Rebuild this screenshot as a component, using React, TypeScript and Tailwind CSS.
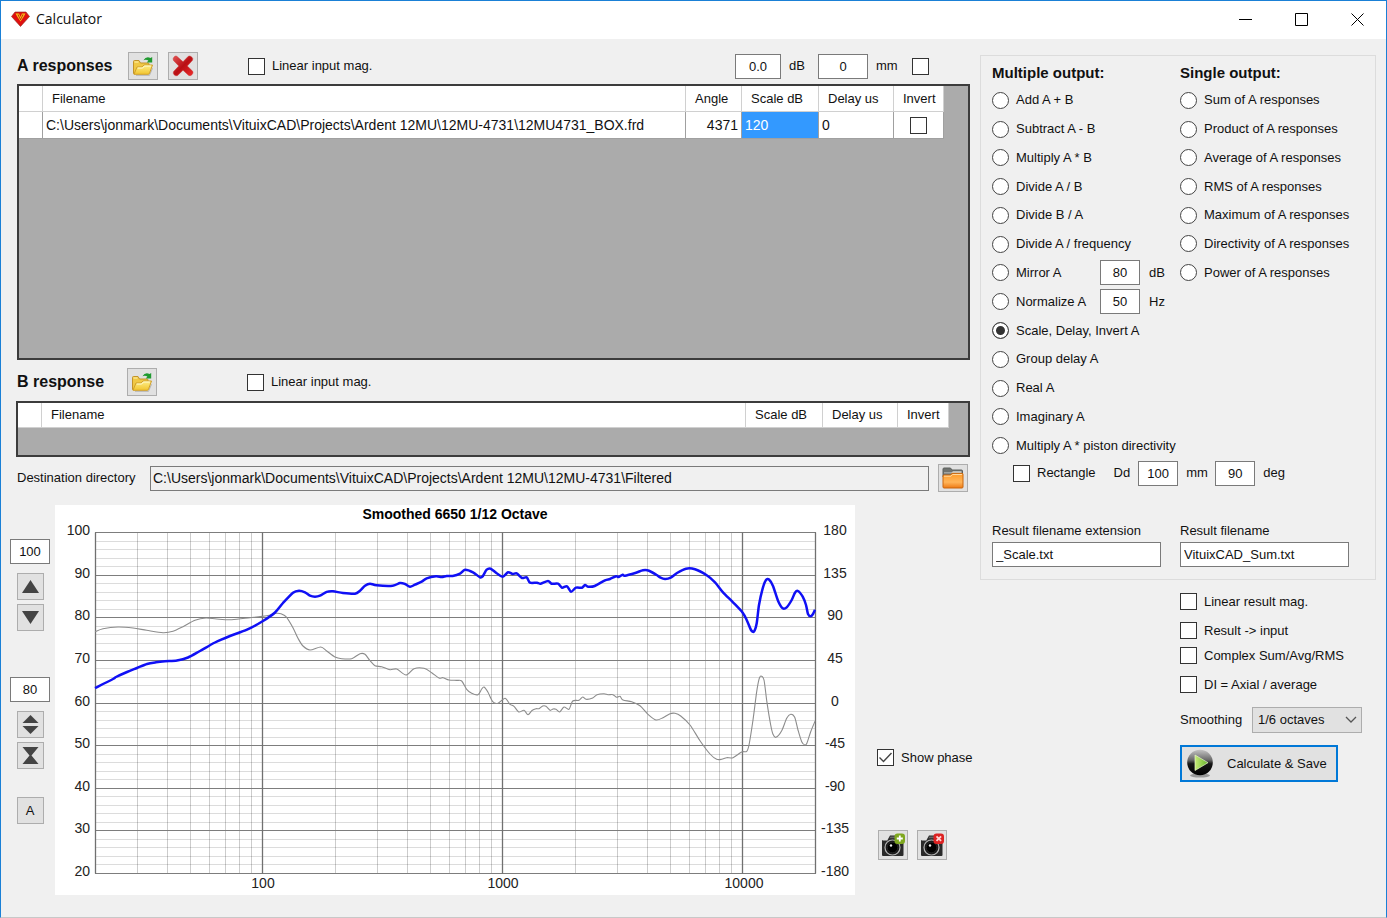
import type { ReactNode } from "react";

type Point = [number, number];

const multipleOutputs: { label: string; value?: string; unit?: string }[] = [
    { label: "Add A + B" },
    { label: "Subtract A - B" },
    { label: "Multiply A * B" },
    { label: "Divide A / B" },
    { label: "Divide B / A" },
    { label: "Divide A / frequency" },
    { label: "Mirror A", value: "80", unit: "dB" },
    { label: "Normalize A", value: "50", unit: "Hz" },
    { label: "Scale, Delay, Invert A" },
    { label: "Group delay A" },
    { label: "Real A" },
    { label: "Imaginary A" },
    { label: "Multiply A * piston directivity" },
];

const singleOutputs = [
    "Sum of A responses",
    "Product of A responses",
    "Average of A responses",
    "RMS of A responses",
    "Maximum of A responses",
    "Directivity of A responses",
    "Power of A responses",
];

const magnitude: Point[] = [
    [40, 183], [58, 174], [61, 172], [72, 167], [82, 163], [92, 159], [101, 157.3], [110, 156.3], [122, 155.5], [133, 152.5],
    [145, 146], [160, 137.5], [175, 131], [192, 124.7], [208, 116], [220, 107.5], [228, 98], [238, 87.7], [244, 85.7],
    [250, 87.3], [255, 90.7], [260, 91.7], [265, 90.7], [271.7, 86.9], [278, 86.3], [288, 88], [300, 88.7], [305, 85.7],
    [310, 80.7], [315, 78.7], [321.7, 80.3], [337.7, 80.7], [345, 78], [350, 79], [355, 81.7], [360, 79.7], [366.7, 76.7],
    [371.7, 73.3], [381, 71.3], [386.7, 72], [391.7, 71], [397.7, 71], [405, 68.7], [410, 64.7], [418, 67.3], [425, 72.3],
    [427.7, 71.3], [431.7, 64.7], [435.7, 63.7], [441.7, 68.3], [447.7, 71.7], [453, 67.3], [457.7, 69], [461.7, 68.3],
    [467, 73], [471.7, 72.3], [475, 77.7], [482, 77.7], [485.7, 78.7], [493, 76], [496.7, 78.7], [503, 78.7], [507, 82.7],
    [512, 81.3], [516, 86.7], [521, 82.7], [527, 82.7], [530, 80], [533, 81.7], [539.7, 81], [550, 75.3], [555, 74],
    [561, 71.3], [563.7, 72], [567.7, 69.7], [570, 70.7], [581, 67.7], [588, 65.3], [594, 65.7], [601.7, 70], [605, 72.3],
    [610, 74], [615.7, 72.7], [622, 68], [631, 63.7], [640, 64.3], [651.7, 70.3], [660, 77.3], [668, 87.3], [678, 97.3],
    [687.7, 107.7], [692, 115.7], [696, 125], [699, 126.5], [701.7, 118.3], [704, 100], [707.7, 83.3], [711, 75], [714, 74.5],
    [718, 81], [723, 95.7], [727.7, 103.3], [731.7, 102.3], [736.7, 95], [740, 87.7], [743, 86], [747.7, 91.7], [751, 100],
    [753, 109], [755.7, 111.3], [758, 109], [760, 104.7],
];

const phase: Point[] = [
    [40, 126.7], [48, 123.7], [63, 122], [78, 123], [91.7, 125.3], [108, 127.7], [118, 126.3], [128, 121.7], [140, 115.3],
    [151, 113], [161.7, 114], [176.7, 114.7], [195, 112.7], [211.7, 110.7], [221.7, 108.3], [226, 108.8], [231, 111.7],
    [237.7, 122.3], [243, 133.3], [248, 141], [255, 145], [265.7, 142], [271.7, 146], [280, 152], [286.7, 153.7],
    [296.7, 153.7], [305, 148.7], [310, 149.3], [315, 155.7], [320, 160.7], [326.7, 161.7], [335, 164.7], [341.7, 164],
    [351, 170], [359, 163.7], [369, 163.3], [376.7, 167.7], [384, 173], [388, 172.7], [394, 175], [401.7, 175.4],
    [406.7, 176], [411.7, 184.3], [416.7, 188.3], [423, 189.7], [426.7, 184], [429, 182], [433, 187.3], [437.7, 196.7],
    [443, 198.3], [450, 193.3], [455, 199.3], [459, 201.3], [463.7, 207], [469, 205.3], [473, 209.7], [477, 205.5],
    [481, 203.7], [484, 203.7], [487.7, 201], [491, 201.3], [495, 205.3], [498, 204], [501, 204.3], [504.7, 207], [509, 202],
    [514, 204.3], [517.7, 196], [524, 195.3], [527.7, 192], [531, 194.3], [537.7, 193], [542, 189.7], [549, 188.7],
    [553, 189.7], [558, 189.7], [561.7, 192.3], [565, 191.3], [568, 195], [576.7, 196.7], [585, 200.7], [593, 209.3],
    [601, 215], [608, 212.7], [615, 208.7], [620, 208.3], [625.7, 211], [635, 220], [645, 235.7], [655, 249], [661.7, 254.3],
    [666.7, 254.3], [671.7, 252.7], [678, 252.7], [686.7, 247], [691.7, 246.3], [694, 240], [698, 215], [701.7, 186.7],
    [704, 174.3], [706, 171], [709, 175], [712, 197.7], [715.7, 220], [718, 229.3], [721, 232.3], [726.7, 225.7],
    [731.7, 213.3], [735.7, 209.3], [739.7, 212.3], [743, 225], [746.7, 236.7], [750, 240], [752, 238], [755.7, 226.7],
    [760, 216.3],
];

// Catmull-Rom through the points
function smoothPath(pts: Point[]) {
    let d = `M${pts[0][0]} ${pts[0][1]}`;
    for (let i = 0; i < pts.length - 1; i++) {
        const p0 = pts[i - 1] ?? pts[i];
        const p1 = pts[i];
        const p2 = pts[i + 1];
        const p3 = pts[i + 2] ?? p2;
        d += `C${p1[0] + (p2[0] - p0[0]) / 7} ${p1[1] + (p2[1] - p0[1]) / 7} ${p2[0] - (p3[0] - p1[0]) / 7} ${p2[1] - (p3[1] - p1[1]) / 7} ${p2[0]} ${p2[1]}`;
    }
    return d;
}

function Chart() {
    const top = 27.5;
    const bottom = 368.5;
    const step = (bottom - top) / 8;
    const xOf = (f: number) => Math.floor(40 + 240 * Math.log10(f / 20)) + 0.5;

    const minorX: number[] = [];
    for (const decade of [10, 100, 1000, 10000]) {
        for (let m = 2; m < 10; m++) {
            const f = m * decade;
            if (f > 20 && f < 20000) minorX.push(xOf(f));
        }
    }
    const minorY = Array.from({ length: 40 }, (_, i) => i).filter((i) => i % 5 !== 0);

    return (
        <svg viewBox="0 0 800 390" className="block h-auto w-full bg-white font-['Liberation_Sans',sans-serif] text-[14px]" role="img" aria-label="Frequency response">
            <g stroke="#dcdcdc">
                {minorY.map((i) => (
                    <line key={i} x1={40} x2={760} y1={Math.floor(top + (i * step) / 5) + 0.5} y2={Math.floor(top + (i * step) / 5) + 0.5} />
                ))}
            </g>
            <g stroke="#000" strokeOpacity={0.2}>
                {minorX.map((x) => (
                    <line key={x} x1={x} x2={x} y1={top} y2={bottom} />
                ))}
            </g>
            <g stroke="#7d7d7d">
                {[0, 1, 2, 3, 4, 5, 6, 7, 8].map((i) => (
                    <line key={i} x1={40} x2={761} y1={Math.floor(top + i * step) + 0.5} y2={Math.floor(top + i * step) + 0.5} />
                ))}
            </g>
            <g stroke="#707070" strokeWidth={1.3}>
                {[20, 100, 1000, 10000, 20000].map((f) => (
                    <line key={f} x1={xOf(f)} x2={xOf(f)} y1={top} y2={bottom} />
                ))}
            </g>
            <path d={smoothPath(phase)} fill="none" stroke="#8c8c8c" strokeWidth={1.1} strokeLinejoin="round" />
            <path d={smoothPath(magnitude)} fill="none" stroke="#1010f5" strokeWidth={2.5} strokeLinejoin="round" />

            <text x={400} y={14} textAnchor="middle" fontSize={14} fontWeight={700}>Smoothed 6650 1/12 Octave</text>
            <g fontSize={14} fill="#222">
                {[100, 90, 80, 70, 60, 50, 40, 30, 20].map((v, i) => (
                    <text key={v} x={35} y={30 + i * step} textAnchor="end">{v}</text>
                ))}
                {[180, 135, 90, 45, 0, -45, -90, -135, -180].map((v, i) => (
                    <text key={v} x={780} y={30 + i * step} textAnchor="middle">{v}</text>
                ))}
                <text x={208} y={383} textAnchor="middle">100</text>
                <text x={448} y={383} textAnchor="middle">1000</text>
                <text x={689} y={383} textAnchor="middle">10000</text>
            </g>
        </svg>
    );
}

function OpenFolderIcon() {
    return (
        <svg width="22" height="20" viewBox="0 0 22 20" aria-hidden="true">
            <defs>
                <linearGradient id="folderFront" x1="0" y1="0" x2="0" y2="1">
                    <stop offset="0" stopColor="#fdee8a" />
                    <stop offset="1" stopColor="#f2c52e" />
                </linearGradient>
            </defs>
            <path d="M4 19.3h13.500l3-7" stroke="#999" strokeOpacity="0.6" fill="none" />
            <path d="M1.500 17.500V5.500q0-1 1-1H7L8.500 7H16q1 0 1 1v5z" fill="#f0c845" stroke="#c2932a" />
            <path d="M2.500 6h4" stroke="#fff3b0" />
            <path d="m2 18.300 3-7.300h5.200l1.800-2h8.500l-3 8.300q-.3 1-1.300 1z" fill="url(#folderFront)" stroke="#cf9f2a" />
            <path d="M5.700 12h5l1.600-2h6.500" stroke="#fffbd2" fill="none" />
            <path d="M11.500 4.300q2.500-4.300 7-2.300l1.700-1V6.500h-5.400l1.600-2q-2.400-1.600-4.900-.2z" fill="#1f9a30" />
        </svg>
    );
}

function DeleteIcon() {
    return (
        <svg width="22" height="22" viewBox="0 0 22 22" aria-hidden="true">
            <defs>
                <linearGradient id="crossFill" x1="0" y1="0" x2="1" y2="1">
                    <stop offset="0" stopColor="#e25454" />
                    <stop offset="0.5" stopColor="#b90f14" />
                    <stop offset="1" stopColor="#f02c2c" />
                </linearGradient>
            </defs>
            <path d="M4.800 1.300 11 6.800l5.300-5.500q1.600-1 3.400.7 1.800 1.700.8 3.300L15.300 11l5.400 5.300q1 1.700-.8 3.500-1.800 1.600-3.400.5L11 15.200l-5.400 5.300q-1.700 1-3.500-.7-1.500-1.700-.5-3.300L6.800 11 1.500 5.500Q.5 3.800 1.900 2.200 3.300.5 4.800 1.300z" fill="url(#crossFill)" stroke="#c33" strokeWidth="0.5" />
        </svg>
    );
}

function OrangeFolderIcon() {
    return (
        <svg width="22" height="22" viewBox="0 0 22 22" aria-hidden="true">
            <defs>
                <linearGradient id="orangeFront" x1="0" y1="0" x2="0" y2="1">
                    <stop offset="0" stopColor="#ff9a26" />
                    <stop offset="0.6" stopColor="#ffb55a" />
                    <stop offset="1" stopColor="#ee7a14" />
                </linearGradient>
            </defs>
            <path d="M1 10V2q0-1 1-1h6.500L10 3h9.500q1 0 1 1v6z" fill="#6f7370" stroke="#5c605d" />
            <path d="M2 5.500h7.500L11 4.200h8.500v2H2z" fill="#d3d6d3" />
            <path d="M1 20V9q0-1 1-1h6.500L10 6.300h10q1 0 1 1V20q0 1-1 1H2q-1 0-1-1z" fill="url(#orangeFront)" stroke="#c9660e" />
            <path d="M2 9.200h7L10.500 7.500H20" stroke="#ffd9a0" fill="none" />
        </svg>
    );
}

function PlayIcon() {
    return (
        <svg width="28" height="29" viewBox="0 0 28 29" aria-hidden="true">
            <defs>
                <linearGradient id="ball" x1="0" y1="0" x2="0" y2="1">
                    <stop offset="0" stopColor="#c4c4c4" />
                    <stop offset="0.4" stopColor="#6a6a6a" />
                    <stop offset="0.55" stopColor="#161616" />
                    <stop offset="1" stopColor="#000" />
                </linearGradient>
                <linearGradient id="play" x1="0" y1="0" x2="1" y2="0">
                    <stop offset="0" stopColor="#c8ec78" />
                    <stop offset="1" stopColor="#63b32a" />
                </linearGradient>
            </defs>
            <ellipse cx="14" cy="26.500" rx="10" ry="2" fill="#999" />
            <circle cx="14" cy="13.500" r="12.800" fill="url(#ball)" />
            <path d="M9 6v15.500L22 13.700z" fill="url(#play)" stroke="#e6f5c8" strokeWidth="0.700" />
        </svg>
    );
}

function CameraIcon({ kind }: { kind: "add" | "remove" }) {
    return (
        <svg width="24" height="24" viewBox="0 0 24 24" aria-hidden="true">
            <path d="M1 7h5.500L9 2.500h7L18 7h4.500v15q0 1-1 1H2q-1 0-1-1z" fill="#2a2a2a" />
            <path d="M9.500 3.500h6l.8 1.800H8.500z" fill="#666" />
            <path d="M1.500 7.500h5" stroke="#888" />
            <circle cx="11.500" cy="14.500" r="7.500" fill="#1a1a1a" stroke="#b5b5b5" strokeWidth="1.200" />
            <circle cx="11.500" cy="14.500" r="5.300" fill="#000" stroke="#222" />
            <circle cx="10" cy="12.500" r="1.200" fill="#eee" />
            {kind === "add" ? (
                <>
                    <rect x="13.500" y=".5" width="10.500" height="10.500" rx="3" fill="#7fa81f" />
                    <path d="M18.800 2.500v6M15.800 5.500h6" stroke="#fff" strokeWidth="1.800" />
                </>
            ) : (
                <>
                    <rect x="13.500" y=".5" width="10.500" height="10.500" rx="3" fill="#dd2222" />
                    <path d="m16.500 3.300 4.600 4.600m0-4.600-4.600 4.600" stroke="#ffd5d5" strokeWidth="1.800" />
                </>
            )}
        </svg>
    );
}

function LogoIcon() {
    return (
        <svg width="19" height="16" viewBox="0 0 19 16" aria-hidden="true">
            <path d="M4 1h11l3.500 4.500L9.500 15.500.5 5.500z" fill="#e00f0f" stroke="#8c2a1c" strokeWidth="0.600" />
            <path d="M4.500 2.500H8L9.500 6 11 2.500h3.500l-2 3.500-3 4.500L6.500 6z" fill="#f7c417" />
            <path d="M6.500 3.500h1L9.500 8l2-4.500h1L9.500 9.500z" fill="#c02010" />
        </svg>
    );
}

function ToolButton({ label, className = "h-[28px] w-[30px]", children }: { label: string; className?: string; children: ReactNode }) {
    return (
        <button type="button" aria-label={label} className={`flex shrink-0 items-center justify-center border border-[#adadad] bg-[#e1e1e1] ${className}`}>
            {children}
        </button>
    );
}

function Check({ label, title, checked }: { label?: string; title?: string; checked?: boolean }) {
    return (
        <label className="flex w-fit items-center gap-[7px] whitespace-nowrap">
            <span className="relative block size-[17px] shrink-0">
                <input type="checkbox" aria-label={title} defaultChecked={checked} className="peer block size-[17px] appearance-none border border-[#333] bg-white" />
                <svg viewBox="0 0 17 17" className="pointer-events-none absolute inset-0 hidden peer-checked:block" aria-hidden="true">
                    <path d="m2.500 8.500 4 4 8-8.500" fill="none" stroke="#444" strokeWidth="1.400" />
                </svg>
            </span>
            {label}
        </label>
    );
}

function Radio({ label, checked, className = "" }: { label: string; checked?: boolean; className?: string }) {
    return (
        <label className={`flex items-center gap-[7px] whitespace-nowrap ${className}`}>
            <input
                type="radio"
                name="output"
                defaultChecked={checked}
                className="size-[17px] shrink-0 appearance-none rounded-full border border-[#444] bg-white checked:bg-[#333] checked:shadow-[inset_0_0_0_3px_white]"
            />
            {label}
        </label>
    );
}

function NumberBox({ value, label, className = "w-[40px]" }: { value: string; label: string; className?: string }) {
    return <input type="text" aria-label={label} defaultValue={value} className={`h-[25px] shrink-0 border border-[#7a7a7a] bg-white text-center ${className}`} />;
}

function TextField({ id, label, value }: { id: string; label: string; value: string }) {
    return (
        <div className="flex w-[188px] flex-col pr-[19px]">
            <label htmlFor={id} className="h-[19px] leading-[16px]">{label}</label>
            <input id={id} type="text" defaultValue={value} className="h-[25px] w-full border border-[#7a7a7a] bg-white px-[3px]" />
        </div>
    );
}

const th = "border-r border-b border-[#d0d0d0] px-[9px] text-left font-normal";
const td = "border-r border-b border-[#a0a0a0] px-[3px]";

function ResponsesA() {
    return (
        <div className="mt-[4px] ml-[7px] h-[276px] border-2 border-[#3c3c3c] bg-[#ababab] pr-[24px]">
            <table className="w-full table-fixed border-separate border-spacing-0 bg-white">
                <colgroup>
                    <col className="w-[24px]" />
                    <col />
                    <col className="w-[56px]" />
                    <col className="w-[77px]" />
                    <col className="w-[75px]" />
                    <col className="w-[50px]" />
                </colgroup>
                <thead>
                    <tr className="h-[26px]">
                        <th className={th}></th>
                        <th className={th}>Filename</th>
                        <th className={th}>Angle</th>
                        <th className={th}>Scale dB</th>
                        <th className={th}>Delay us</th>
                        <th className={th}>Invert</th>
                    </tr>
                </thead>
                <tbody>
                    <tr className="h-[27px]">
                        <td className={td}></td>
                        <td className={`${td} text-[14px] whitespace-nowrap`}>C:\Users\jonmark\Documents\VituixCAD\Projects\Ardent 12MU\12MU-4731\12MU4731_BOX.frd</td>
                        <td className={`${td} text-right text-[14px]`}>4371</td>
                        <td className={`${td} bg-[#3399ff] text-[14px] text-white`}>120</td>
                        <td className={`${td} text-[14px]`}>0</td>
                        <td className={td}>
                            <div className="flex justify-center">
                                <Check title="Invert row" />
                            </div>
                        </td>
                    </tr>
                </tbody>
            </table>
        </div>
    );
}

function ResponseB() {
    return (
        <div className="mt-[5px] ml-[6px] h-[56px] border-2 border-[#3c3c3c] bg-[#ababab] pr-[19px]">
            <table className="w-full table-fixed border-separate border-spacing-0 bg-white">
                <colgroup>
                    <col className="w-[24px]" />
                    <col />
                    <col className="w-[77px]" />
                    <col className="w-[75px]" />
                    <col className="w-[51px]" />
                </colgroup>
                <thead>
                    <tr className="h-[25px]">
                        <th className={th}></th>
                        <th className={th}>Filename</th>
                        <th className={th}>Scale dB</th>
                        <th className={th}>Delay us</th>
                        <th className={th}>Invert</th>
                    </tr>
                </thead>
            </table>
        </div>
    );
}

function ScaleControls() {
    const small = "h-[27px] w-[27px]";
    return (
        <div className="flex w-[40px] shrink-0 flex-col items-center pt-[34px]">
            <NumberBox value="100" label="Scale maximum" />
            <div className="mt-[9px] flex flex-col gap-[4px]">
                <ToolButton label="Move up" className={small}>
                    <svg width="17" height="13" viewBox="0 0 17 13" fill="#444"><path d="M8.500 0 17 13H0z" /></svg>
                </ToolButton>
                <ToolButton label="Move down" className={small}>
                    <svg width="17" height="13" viewBox="0 0 17 13" fill="#444"><path d="M0 0h17L8.500 13z" /></svg>
                </ToolButton>
            </div>
            <div className="mt-[46px]">
                <NumberBox value="80" label="Scale range" />
            </div>
            <div className="mt-[9px] flex flex-col gap-[4px]">
                <ToolButton label="Expand" className={small}>
                    <svg width="17" height="19" viewBox="0 0 17 19" fill="#444"><path d="M8.500 0 16.500 8H.5zM.5 11h16l-8 8z" /></svg>
                </ToolButton>
                <ToolButton label="Compress" className={small}>
                    <svg width="17" height="17" viewBox="0 0 17 17" fill="#444"><path d="M.5 0h16L9.500 8.500 16.500 17H.5l7-8.500z" /></svg>
                </ToolButton>
            </div>
            <button type="button" className="mt-[28px] h-[27px] w-[27px] border border-[#adadad] bg-[#e1e1e1]">A</button>
        </div>
    );
}

function OutputPanel() {
    return (
        <section className="border border-[#dcdcdc] pt-[8px] pb-[12px] pl-[11px]">
            <div className="flex">
                <fieldset className="w-[188px]">
                    <legend className="h-[22px] text-[15px] leading-[18px] font-bold whitespace-nowrap">Multiple output:</legend>
                    <div className="flex h-[374px] flex-col">
                        {multipleOutputs.map((o) => (
                            <div key={o.label} className="flex flex-1 items-center">
                                <Radio label={o.label} checked={o.label.startsWith("Scale")} className={o.value ? "w-[108px]" : ""} />
                                {o.value && (
                                    <>
                                        <NumberBox value={o.value} label={o.label} />
                                        <span className="ml-[9px]">{o.unit}</span>
                                    </>
                                )}
                            </div>
                        ))}
                    </div>
                </fieldset>
                <fieldset>
                    <legend className="h-[22px] text-[15px] leading-[18px] font-bold whitespace-nowrap">Single output:</legend>
                    <div className="flex h-[201px] flex-col">
                        {singleOutputs.map((label) => (
                            <div key={label} className="flex flex-1 items-center">
                                <Radio label={label} />
                            </div>
                        ))}
                    </div>
                </fieldset>
            </div>
            <div className="flex h-[26px] items-center pl-[21px]">
                <Check label="Rectangle" />
                <span className="ml-[18px]">Dd</span>
                <div className="ml-[8px] flex items-center gap-[8px]">
                    <NumberBox value="100" label="Piston diameter" />
                    <span className="w-[21px]">mm</span>
                    <NumberBox value="90" label="Piston angle" />
                    <span>deg</span>
                </div>
            </div>
            <div className="mt-[37px] flex">
                <TextField id="extension" label="Result filename extension" value="_Scale.txt" />
                <TextField id="filename" label="Result filename" value="VituixCAD_Sum.txt" />
            </div>
        </section>
    );
}

export default function App() {
    return (
        <div className="flex min-h-screen flex-col border border-[#1a80d6] border-b-[#c8c8c8] bg-[#f0f0f0] font-['Liberation_Sans',Arial,sans-serif] text-[13px] leading-[16px] text-[#111]">
            <header className="flex h-[38px] items-center bg-white pr-[1px] pb-[2px] pl-[10px]">
                <LogoIcon />
                <h1 className="ml-[6px] flex-1 font-['Open_Sans',sans-serif] text-[14px]">Calculator</h1>
                <button type="button" aria-label="Minimize" className="flex h-full w-14 items-center justify-center">
                    <svg width="13" height="13" viewBox="0 0 13 13" stroke="#000"><path d="M0 6.500h13" /></svg>
                </button>
                <button type="button" aria-label="Maximize" className="flex h-full w-14 items-center justify-center">
                    <svg width="13" height="13" viewBox="0 0 13 13" stroke="#000" fill="none"><path d="M.5.500h12v12H.5z" /></svg>
                </button>
                <button type="button" aria-label="Close" className="flex h-full w-14 items-center justify-center">
                    <svg width="13" height="13" viewBox="0 0 13 13" stroke="#000"><path d="m.5.500 12 12m0-12-12 12" /></svg>
                </button>
            </header>

            <main className="flex flex-1 gap-[10px] pr-[10px] pl-[9px]">
                <div className="min-w-0 flex-1">
                    {/* A responses */}
                    <div className="mt-[13px] flex h-[28px] items-center pl-[7px]">
                        <h2 className="w-[111px] text-[16px] font-bold">A responses</h2>
                        <div className="flex gap-[10px]">
                            <ToolButton label="Open A responses"><OpenFolderIcon /></ToolButton>
                            <ToolButton label="Remove A responses"><DeleteIcon /></ToolButton>
                        </div>
                        <div className="ml-[50px]">
                            <Check label="Linear input mag." />
                        </div>
                        <div className="ml-auto flex items-center gap-[8px] pr-[41px]">
                            <NumberBox value="0.0" label="Scale all" className="w-[46px]" />
                            <span className="w-[21px]">dB</span>
                            <NumberBox value="0" label="Delay all" className="w-[50px]" />
                            <span className="w-[28px]">mm</span>
                            <Check title="Invert all" />
                        </div>
                    </div>
                    <ResponsesA />

                    {/* B response */}
                    <div className="mt-[8px] flex h-[28px] items-center pl-[7px]">
                        <h2 className="w-[110px] text-[16px] font-bold">B response</h2>
                        <ToolButton label="Open B response"><OpenFolderIcon /></ToolButton>
                        <div className="ml-[90px]">
                            <Check label="Linear input mag." />
                        </div>
                    </div>
                    <ResponseB />

                    <div className="mt-[7px] flex h-[28px] items-center pl-[7px]">
                        <label htmlFor="destination" className="w-[133px] shrink-0">Destination directory</label>
                        <input
                            id="destination"
                            type="text"
                            readOnly
                            value="C:\Users\jonmark\Documents\VituixCAD\Projects\Ardent 12MU\12MU-4731\Filtered"
                            className="h-[25px] min-w-0 flex-1 border border-[#7a7a7a] px-[2px] text-[14px]"
                        />
                        <div className="mr-[2px] ml-[9px]">
                            <ToolButton label="Browse destination"><OrangeFolderIcon /></ToolButton>
                        </div>
                    </div>

                    <div className="mt-[13px] flex gap-[5px]">
                        <ScaleControls />
                        <div className="min-w-0 flex-1">
                            <Chart />
                        </div>
                        <div className="flex w-[110px] shrink-0 flex-col pt-[244px] pl-[17px]">
                            <Check label="Show phase" checked />
                            <div className="mt-[64px] flex gap-[9px] pl-[1px]">
                                <ToolButton label="Add snapshot" className="h-[30px] w-[30px]"><CameraIcon kind="add" /></ToolButton>
                                <ToolButton label="Remove snapshot" className="h-[30px] w-[30px]"><CameraIcon kind="remove" /></ToolButton>
                            </div>
                        </div>
                    </div>
                </div>

                <aside className="w-[396px] shrink-0 pt-[16px]">
                    <OutputPanel />
                    <div className="flex flex-col pt-[9px] pl-[200px]">
                        <div className="grid auto-rows-[25px] items-center gap-[4px]">
                            <Check label="Linear result mag." />
                            <Check label="Result -> input" />
                        </div>
                        <div className="grid auto-rows-[25px] items-center gap-[4px]">
                            <Check label="Complex Sum/Avg/RMS" />
                            <Check label="DI = Axial / average" />
                        </div>
                        <div className="mt-[10px] flex items-center">
                            <label htmlFor="smoothing" className="w-[72px]">Smoothing</label>
                            <div className="relative">
                                <select id="smoothing" className="block h-[26px] w-[110px] appearance-none border border-[#adadad] bg-[#e1e1e1] px-[5px]">
                                    <option>1/6 octaves</option>
                                </select>
                                <svg viewBox="0 0 12 8" className="pointer-events-none absolute top-[9px] right-[5px] w-3" aria-hidden="true">
                                    <path d="m1 1 5 5 5-5" fill="none" stroke="#555" strokeWidth="1.300" />
                                </svg>
                            </div>
                        </div>
                        <button type="button" className="mt-[12px] flex h-[37px] w-[158px] items-center gap-[13px] border-2 border-[#0078d7] bg-[#e1e1e1] pl-[4px]">
                            <PlayIcon />
                            Calculate &amp; Save
                        </button>
                    </div>
                </aside>
            </main>
        </div>
    );
}
